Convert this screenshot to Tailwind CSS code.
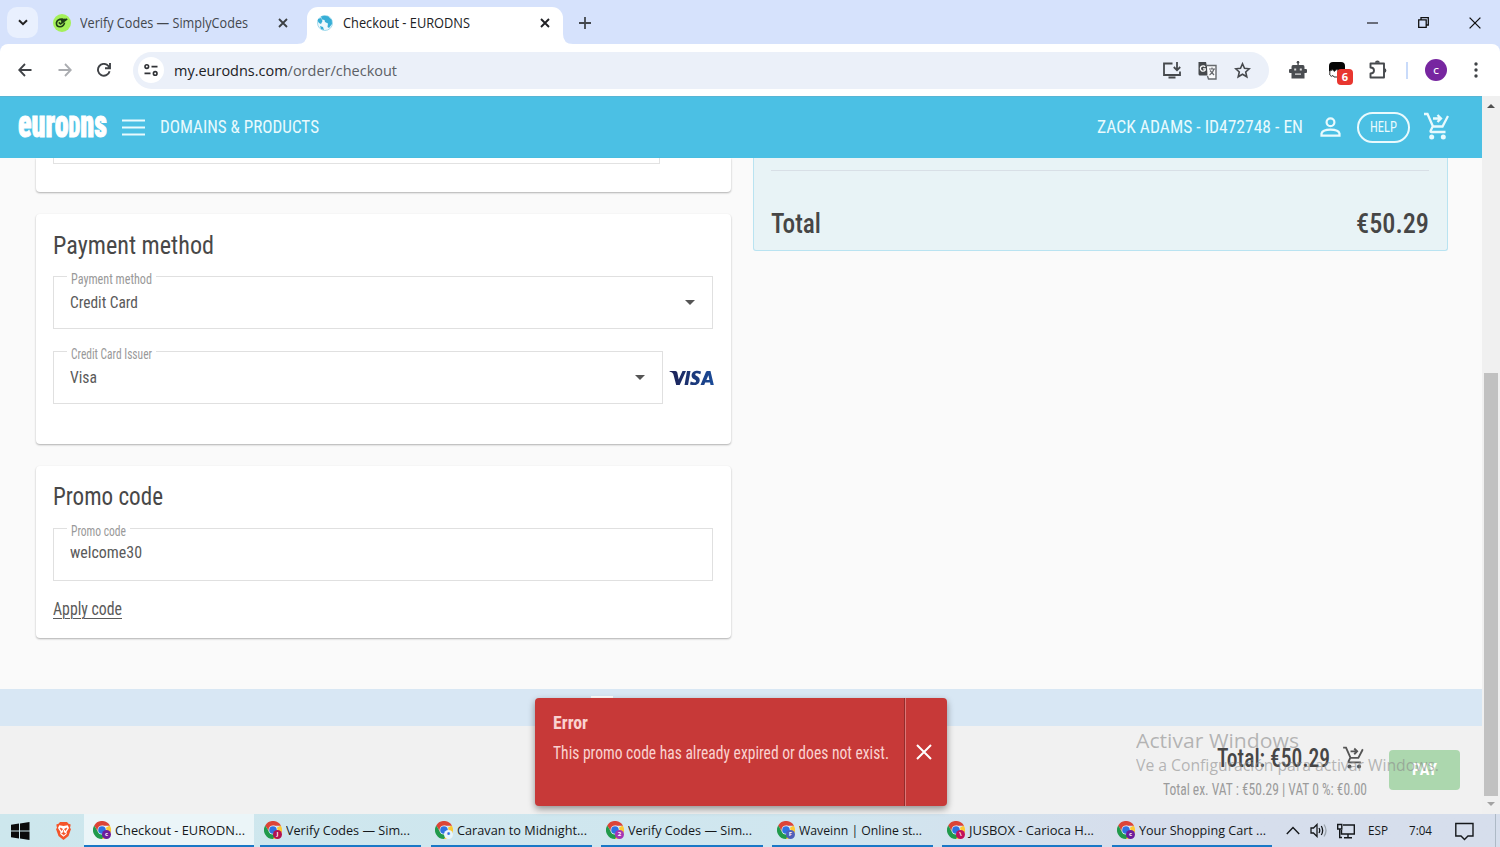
<!DOCTYPE html>
<html lang="en">
<head>
<meta charset="utf-8">
<title>Checkout - EURODNS</title>
<script src="https://cdn.jsdelivr.net/npm/@tailwindcss/browser@4"></script>
</head>
<body class="w-[1500px] h-[847px] overflow-hidden bg-[#fafafa] font-['Open_Sans',sans-serif]">
<svg class="hidden">
  <symbol id="chrome" viewBox="0 0 18 18">
    <path d="M9 9 L16.8 4.5 A9 9 0 0 1 9 18Z" fill="#fcc934"/>
    <path d="M9 4.8H17A9 9 0 0 0 1.2 4.5L5.3 11Z" fill="#dc4437"/><path d="M1.2 4.5L5.3 11.2L9 13.2L12.6 11.2L9 18A9 9 0 0 1 1.2 4.5Z" fill="#219a4c"/>
    <circle cx="9" cy="9" r="4.5" fill="#eef6fb"/><circle cx="9" cy="9" r="3.8" fill="#2f72e2"/>
  </symbol>
  <symbol id="cart" viewBox="0 0 26 28">
    <path d="M1 2H4.5L10 14.5H19.5L25 4M9.7 14.5L7.6 18.8Q7.3 20 8.5 20H22.5M10 6.5H17M14.5 3L18 6.5L14.5 10" fill="none" stroke="currentColor" stroke-width="2.3"/>
    <circle cx="8.7" cy="25" r="2.5" fill="currentColor"/><circle cx="20.3" cy="25" r="2.5" fill="currentColor"/>
  </symbol>
</svg>

<div class="flex flex-col w-full h-full">
  <!-- Tab strip -->
  <div class="h-[44px] shrink-0 flex bg-[#d6e2fc] text-[14px] text-[#43474d]">
    <div class="ml-[7px] mt-[7px] size-[31px] rounded-[10px] bg-[#e9f0fe] flex items-center justify-center">
      <svg width="10" height="7" viewBox="0 0 10 7" fill="none" stroke="#222" stroke-width="2"><path d="M1 1.2L5 5.2L9 1.2"/></svg>
    </div>
    <div class="ml-[15px] w-[236px] h-[45px] flex items-center">
      <svg width="18" height="18" viewBox="0 0 18 18"><circle cx="9" cy="9" r="9" fill="#a4f05a"/><path d="M10.5 5.2Q4.2 4.6 3.4 9Q3.4 12.8 7 12.8Q10.6 12.6 11.6 8.6M5.8 8.4L7.4 10L14.2 4.8M8 7.2L12.6 5" fill="none" stroke="#1f3d16" stroke-width="1.6" stroke-linejoin="round"/></svg>
      <span class="ml-[9px] block whitespace-nowrap origin-left" data-w="168">Verify Codes — SimplyCodes</span>
      <svg class="ml-[30px]" width="10" height="10" viewBox="0 0 10 10" stroke="#3c4043" stroke-width="1.8"><path d="M1 1L9 9M9 1L1 9"/></svg>
    </div>
    <div class="ml-[8px] w-[10px] h-[34px] self-end flex flex-col justify-end"><svg width="10" height="10"><path d="M10 0V10H0Q10 10 10 0" fill="#fff"/></svg></div>
    <div class="mt-[7px] w-[256px] h-[37px] bg-white rounded-t-[11px] flex items-center pb-[6px] text-[#202124]">
      <svg class="ml-[10px]" width="16" height="16" viewBox="0 0 16 16"><circle cx="8" cy="8" r="7.5" fill="#eef9fc" stroke="#8fd2e9" stroke-width=".8"/><path d="M4 1.6L7 .8L11 1.2L14.8 5L15 9L12 13L10.5 12L11 8.5L8 7L7.5 5L5 4.5ZM1 4L4 3L5.5 6L4 9L2 8L.7 6ZM3 11L6 12L7 15L4 14Z" fill="#37aed6"/></svg>
      <span class="ml-[10px] block whitespace-nowrap origin-left" data-w="127">Checkout - EURODNS</span>
      <svg class="ml-[70px]" width="10" height="10" viewBox="0 0 10 10" stroke="#202124" stroke-width="1.9"><path d="M1 1L9 9M9 1L1 9"/></svg>
    </div>
    <div class="w-[10px] flex flex-col justify-end"><svg width="10" height="10"><path d="M0 0V10H10Q0 10 0 0" fill="#fff"/></svg></div>
    <div class="ml-[6px] h-[45px] flex items-center"><svg width="12" height="12" viewBox="0 0 12 12" stroke="#43474d" stroke-width="1.8"><path d="M6 0V12M0 6H12"/></svg></div>
    <div class="ml-auto mr-[19px] h-[45px] flex items-center text-[#202124]">
      <svg width="11" height="11" viewBox="0 0 11 11" stroke="currentColor" stroke-width="1.2"><path d="M0 6H11"/></svg>
      <svg class="ml-[40px]" width="11" height="11" viewBox="0 0 11 11" fill="none" stroke="#111" stroke-width="1.3"><path d="M.7 2.8H8.2V10.3H.7ZM3 2.5V.7H10.3V8H8.5"/></svg>
      <svg class="ml-[40px]" width="12" height="12" viewBox="0 0 12 12" stroke="#111" stroke-width="1.3"><path d="M.6 .6L11.4 11.4M11.4 .6L.6 11.4"/></svg>
    </div>
  </div>

  <!-- Toolbar -->
  <div class="h-[52px] shrink-0 bg-[#d6e2fc]">
   <div class="h-[52px] bg-white rounded-t-[8px] flex items-center">
    <svg class="ml-[18px]" width="14" height="14" viewBox="0 0 14 14" fill="none" stroke="#3f4246" stroke-width="1.8"><path d="M13.5 7H1.5M7 1L1.2 7L7 13"/></svg>
    <svg class="ml-[26px]" width="14" height="14" viewBox="0 0 14 14" fill="none" stroke="#aaacb0" stroke-width="1.8"><path d="M.5 7H12.5M7 1L12.8 7L7 13"/></svg>
    <svg class="ml-[25px]" width="14" height="14" viewBox="0 0 14 14" fill="none" stroke="#3f4246" stroke-width="1.9"><path d="M12.6 8.2A5.9 5.9 0 1 1 11.4 3L13 4.7M13 0V5.2H8"/></svg>
    <div class="ml-[22px] w-[1136px] h-[37px] rounded-full bg-[#ebf0f9] flex items-center">
      <div class="ml-[5px] size-[26px] rounded-full bg-white flex items-center justify-center">
        <svg width="14" height="12" viewBox="0 0 14 12" fill="none" stroke="#303236" stroke-width="1.6"><circle cx="2.8" cy="2.6" r="1.8"/><path d="M7.5 2.6H13.5M.5 9.4H6.5"/><circle cx="11.2" cy="9.4" r="1.8"/></svg>
      </div>
      <div class="ml-[10px] w-[260px] text-[15px] text-[#5c6066]"><span class="block whitespace-nowrap origin-left" data-w="223"><span class="text-[#202124]">my.eurodns.com</span>/order/checkout</span></div>
      <svg class="ml-auto" width="18" height="17" viewBox="0 0 18 17" fill="none" stroke="#46494d" stroke-width="1.8"><path d="M9.5 1.5H1V13H17V9.5M14 0V8M10.8 5L14 8.3L17.2 5M5.5 15.5H12.5"/></svg>
      <svg class="ml-[17px]" width="19" height="19" viewBox="0 0 19 19"><path d="M.5 1H8L11 14.5H2Q.5 14.5 .5 13Z" fill="#46494d"/><path d="M9 4.5H18V18H10.5L9.5 15" fill="#fafbfd" stroke="#66696e" stroke-width="1.4"/><path d="M7.2 5.8A2.7 2.7 0 1 0 7.2 9.2V7.8H5" fill="none" stroke="#fff" stroke-width="1.3"/><path d="M11 8H17M14 6.5V8M16 8Q15 12 11.5 14M12 9.5L16 14" fill="none" stroke="#66696e" stroke-width="1.2"/></svg>
      <svg class="ml-[17px] mr-[18px]" width="17" height="17" viewBox="0 0 17 17" fill="none" stroke="#46494d" stroke-width="1.6"><path d="M8.5 1.8L10.5 6.3L15.3 6.8L11.7 10L12.8 14.8L8.5 12.3L4.2 14.8L5.3 10L1.7 6.8L6.5 6.3Z"/></svg>
    </div>
    <svg class="ml-[20px]" width="18" height="18" viewBox="0 0 18 18" fill="#4a4d51"><circle cx="9" cy="1.3" r="1.3"/><path d="M8.4 0H9.8V4H14Q15.5 4 15.5 6V8H17Q18 8 18 9V11Q18 12 17 12H15.5V17.5H2.5V12H1Q0 12 0 11V9Q0 8 1 8H2.5V6Q2.5 4 4 4H8.4Z"/><path d="M5.2 7.5H7.2V9.5H5.2ZM10.8 7.5H12.8V9.5H10.8ZM6 12.5H12V13.7H6Z" fill="#ddd"/></svg>
    <div class="ml-[22px] relative w-[24px] h-[26px]">
      <svg class="mt-[5px]" width="16" height="16" viewBox="0 0 16 16"><path d="M0 4Q0 0 4 0H12Q16 0 16 4V9H0Z" fill="#050505"/><path d="M.8 9V13Q2 15.5 4 13.5L5 15H9V8Q7 6.5 5.5 9.5Q4 6.5 .8 9" fill="#fff" stroke="#333" stroke-width="1"/></svg>
      <div class="absolute left-[8px] top-[12px] w-[16px] h-[16px] rounded-[4px] bg-[#e8362f] text-white text-[11px] font-bold leading-[16px] text-center">6</div>
    </div>
    <svg class="ml-[16px]" width="19" height="20" viewBox="0 0 19 20"><path d="M1.5 3.5H15V17.5H1.5V13.5Q5 13.5 5 10.5T1.5 7.5Z" fill="none" stroke="#46494d" stroke-width="1.9" stroke-linejoin="round"/><path d="M6 2.8A2.4 2.4 0 0 1 10.8 2.8ZM15.5 8A2.6 2.6 0 0 1 15.5 13Z" fill="#46494d"/></svg>
    <div class="ml-[18px] w-[2px] h-[17px] bg-[#c9dbfa]"></div>
    <div class="ml-[17px] size-[22px] rounded-full bg-[#7726a0] text-white text-[9px] font-semibold flex items-center justify-center leading-none">C</div>
    <svg class="ml-[27px]" width="4" height="16" viewBox="0 0 4 16" fill="#3f4246"><circle cx="2" cy="2" r="1.7"/><circle cx="2" cy="8" r="1.7"/><circle cx="2" cy="14" r="1.7"/></svg>
   </div>
  </div>

  <!-- Page viewport -->
  <div class="h-[718px] shrink-0 flex relative font-[Roboto,sans-serif] [font-stretch:75%]">
    <div class="w-[1482px] h-full flex flex-col bg-[#fafafa]">
      <header class="h-[62px] shrink-0 bg-[#4bc0e4] border-t border-[#57b5d4] flex items-center text-[18.5px] text-[#e9fafd]">
        <div class="ml-[18px] w-[89px] h-[40px] leading-[40px] -mt-[8px] text-[39px] font-black text-white"><span class="block whitespace-nowrap origin-left [-webkit-text-stroke:1px_white]" data-w="89">euro<span class="text-[29px]">D</span>ns</span></div>
        <svg class="ml-[15px]" width="23" height="17" viewBox="0 0 23 17" stroke="#e9fafd" stroke-width="2"><path d="M0 1.5H23M0 8.5H23M0 15.5H23"/></svg>
        <span class="ml-[15px] block whitespace-nowrap origin-left" data-w="159">DOMAINS &amp; PRODUCTS</span>
        <div class="ml-auto flex items-center mr-[33px]">
          <span class="block whitespace-nowrap origin-left" data-w="206">ZACK ADAMS - ID472748 - EN</span>
          <svg class="ml-[17px] -mt-[2px]" width="21" height="20" viewBox="0 0 21 20" fill="none" stroke="#e9fafd" stroke-width="2.2"><circle cx="10.5" cy="5.2" r="3.9"/><path d="M1.5 18.7V16.5Q2.5 12.7 10.5 12.7T19.5 16.5V18.7Z"/></svg>
          <div class="ml-[16px] w-[53px] h-[31px] rounded-full border-2 border-[#e9fafd] flex items-center justify-center text-[14.5px]"><span class="block whitespace-nowrap origin-left" data-w="27">HELP</span></div>
          <svg class="ml-[13px] -mt-[3px]" width="26" height="28"><use href="#cart"/></svg>
        </div>
      </header>

      <main class="h-[531px] shrink-0 flex items-start pl-[36px] text-[#5a5a5a]">
        <div class="w-[695px]">
          <section class="h-[34px] bg-white rounded-b-[4px] px-[17px] shadow-[0_1px_2px_rgba(0,0,0,0.3)]"><div class="h-[6px] w-[607px] border border-t-0 border-[#e2e2e2]"></div></section>
          <section class="mt-[22px] h-[230px] bg-white rounded-[4px] pl-[17px] pr-[18px] shadow-[0_1px_2px_rgba(0,0,0,0.3)]">
            <h2 class="pt-[11px] h-[62px] leading-[40px] text-[26.5px] text-[#484848]"><span class="block whitespace-nowrap origin-left" data-w="161">Payment method</span></h2>
            <div class="relative h-[53px] border border-[#e0e0e0] flex items-center pl-[16px] pr-[17px] text-[17px]">
              <span class="absolute left-[13px] -top-[8px] h-[20px] leading-[20px] px-[4px] bg-white text-[14px] text-[#999]"><span class="block whitespace-nowrap origin-left" data-w="81">Payment method</span></span>
              <span class="block whitespace-nowrap origin-left" data-w="68">Credit Card</span>
              <i class="ml-auto border-x-[5.5px] border-x-transparent border-t-[5.5px] border-t-[#555]"></i>
            </div>
            <div class="mt-[22px] flex items-center">
              <div class="relative w-[610px] shrink-0 h-[53px] border border-[#e0e0e0] flex items-center pl-[16px] pr-[17px] text-[17px]">
                <span class="absolute left-[13px] -top-[8px] h-[20px] leading-[20px] px-[4px] bg-white text-[14px] text-[#999]"><span class="block whitespace-nowrap origin-left" data-w="81">Credit Card Issuer</span></span>
                <span class="block whitespace-nowrap origin-left" data-w="27">Visa</span>
                <i class="ml-auto border-x-[5.5px] border-x-transparent border-t-[5.5px] border-t-[#555]"></i>
              </div>
              <svg class="ml-[6px] shrink-0" width="45" height="16" viewBox="0 0 45 16"><defs><linearGradient id="v" gradientUnits="userSpaceOnUse" x1="0" y1="0" x2="45" y2="0"><stop offset="0" stop-color="#1c2054"/><stop offset="1" stop-color="#1b4c99"/></linearGradient></defs><g fill="url(#v)"><path d="M.5 1H6.5Q8 1.2 8.3 2.5L9.7 9.5L13.5 1H17L10.7 15H7.2L4.3 4Q3.8 2.3 .5 1.4Z"/><path d="M18 1H21.5L19 15H15.5Z"/><path d="M32 1.4L31.4 4.3Q26.2 2.2 26.2 4.6C26.2 6.3 31.2 6.5 30.7 10.5C30 15.5 25 15.8 21 14.4L21.7 11.4Q26.8 13.7 27.1 11.2C27.3 9.3 22.2 9.2 22.6 5.2C23.2.7 28 .1 32 1.4Z"/><path fill-rule="evenodd" d="M38.3 1H41.5L44.8 15H41.5L41 12.6H36.2L35.2 15H31.5L37 1.8Q37.4 1 38.3 1ZM39.4 5.2L37.4 10H40.4Z"/></g></svg>
            </div>
          </section>
          <section class="mt-[22px] h-[172px] bg-white rounded-[4px] pl-[17px] pr-[18px] shadow-[0_1px_2px_rgba(0,0,0,0.3)]">
            <h2 class="pt-[10px] h-[62px] leading-[40px] text-[26.5px] text-[#484848]"><span class="block whitespace-nowrap origin-left" data-w="110">Promo code</span></h2>
            <div class="relative h-[53px] border border-[#e0e0e0] flex items-center pb-[3px] pl-[16px] text-[17px]">
              <span class="absolute left-[13px] -top-[8px] h-[20px] leading-[20px] px-[4px] bg-white text-[14px] text-[#999]"><span class="block whitespace-nowrap origin-left" data-w="55">Promo code</span></span>
              <span class="block whitespace-nowrap origin-left" data-w="72">welcome30</span>
            </div>
            <div class="mt-[16px] h-[25px] leading-[25px] text-[17.5px] flex"><span class="block whitespace-nowrap origin-left underline underline-offset-[3px] decoration-1" data-w="69">Apply code</span></div>
          </section>
        </div>
        <aside class="ml-[22px] w-[695px] h-[93px] pl-[17px] pr-[18px] pt-[12px] bg-[#e8f3f6] border border-t-0 border-[#b9e3f1] rounded-b-[3px]">
          <div class="border-t border-[#d8dfe6] h-[32px]"></div>
          <div class="flex justify-between leading-[43px] text-[28px] font-medium text-[#464646]"><span class="block whitespace-nowrap origin-left" data-w="50">Total</span><span class="block whitespace-nowrap origin-left" data-w="73">€50.29</span></div>
        </aside>
      </main>

      <div class="h-[37px] shrink-0 bg-[#d8e7f4] pl-[591px] pt-[7px]"><div class="w-[22px] h-[3px] bg-white"></div></div>
      <footer class="h-[88px] shrink-0 bg-[#f1f1f1] flex justify-end items-start pr-[22px]">
        <div class="mt-[14px] flex flex-col items-end mr-[22px]">
          <div class="h-[38px] flex items-center text-[25px] font-medium text-[#464646]"><span class="block whitespace-nowrap origin-left" data-w="113">Total: €50.29</span><svg class="ml-[12px] mr-[3px] -mt-[4px] text-[#555]" width="22" height="23" viewBox="0 0 26 28"><use href="#cart"/></svg></div>
          <div class="h-[24px] flex items-center text-[16.5px] text-[#9b9b9b]"><span class="block whitespace-nowrap origin-left" data-w="204">Total ex. VAT : €50.29 | VAT 0 %: €0.00</span></div>
        </div>
        <div class="mt-[24px] w-[71px] h-[40px] rounded-[4px] bg-[#acd7ae] flex items-center justify-center text-[17px] font-bold text-white"><span class="block whitespace-nowrap origin-left" data-w="25">PAY</span></div>
      </footer>
    </div>

    <!-- Scrollbar -->
    <div class="w-[18px] h-full bg-[#f0f0f0] flex flex-col items-center">
      <i class="mt-[8px] border-x-[4px] border-x-transparent border-b-[4px] border-b-[#505050]"></i>
      <div class="mt-[265px] w-[14px] h-[423px] bg-[#c1c1c1]"></div>
      <i class="mt-[6px] border-x-[4px] border-x-transparent border-t-[4px] border-t-[#a3a3a3]"></i>
    </div>

    <!-- Windows activation watermark -->
    <div class="absolute left-[1136px] top-[630px] text-[#8a8a8a]/60 font-['Open_Sans',sans-serif] [font-stretch:100%]">
      <div class="h-[29px] leading-[29px] text-[20.5px] flex"><span class="block whitespace-nowrap origin-left" data-w="163">Activar Windows</span></div>
      <div class="h-[22px] leading-[21px] text-[16px] flex"><span class="block whitespace-nowrap origin-left" data-w="303">Ve a Configuración para activar Windows.</span></div>
    </div>

    <!-- Error toast -->
    <div class="absolute left-[535px] top-[602px] w-[412px] h-[108px] rounded-[4px] bg-[#c73938] shadow-[0_3px_7px_rgba(0,0,0,0.4)] flex text-[#fad2d0]">
      <div class="w-[370px] pl-[18px] pt-[13px] border-r border-[#932c2c]">
        <div class="h-[25px] flex items-center text-[18.5px] font-bold"><span class="block whitespace-nowrap origin-left" data-w="35">Error</span></div>
        <div class="mt-[4px] h-[25px] flex items-center text-[18px]"><span class="block whitespace-nowrap origin-left" data-w="336">This promo code has already expired or does not exist.</span></div>
      </div>
      <div class="flex-1 border-l border-[#dc7776] flex items-center justify-center pr-[5px]"><svg width="16" height="16" viewBox="0 0 16 16" stroke="#fff" stroke-width="2"><path d="M1 1L15 15M15 1L1 15"/></svg></div>
    </div>
  </div>

  <!-- Windows taskbar -->
  <div class="h-[33px] shrink-0 flex items-center bg-linear-to-r from-[#cde7ed] via-[#d0e6ef] via-55% to-[#d6deec] to-75% text-[13.5px] text-[#15181b]">
    <svg class="ml-[11px]" width="19" height="18" viewBox="0 0 19 18" fill="#0b0b0b"><path d="M0 2.8L8 1.6V8.5H0ZM9 1.4L18.5 0V8.5H9ZM0 9.5H8V16.4L0 15.2ZM9 9.5H18.5V18L9 16.6Z"/></svg>
    <svg class="ml-[26px]" width="15" height="18" viewBox="0 0 15 18"><path d="M4 0H11L12.5 1.7L14.7 2.5L14 6L15 7L12.5 14L7.5 18L2.5 14L0 7L1 6L.3 2.5L2.5 1.7Z" fill="#f4552a"/><path d="M3.3 3.2L7.5 4L11.7 3.2L13 6L10.5 10L10.8 12L7.5 14.8L4.2 12L4.5 10L2 6Z" fill="#fff"/><path d="M4 6L6.5 7L5.5 8.5ZM11 6L8.5 7L9.5 8.5ZM7.5 8V11M5.5 11.5L7.5 10.5L9.5 11.5L7.5 13" fill="#f4552a" stroke="#f4552a" stroke-width=".7"/></svg>
    <div class="ml-[13px] w-[170px] h-full bg-[#ebf5f8] border-b-2 border-[#1a78c6] flex items-center pl-[9px] pt-[1px]">
      <div class="relative size-[18px]"><svg width="18" height="18"><use href="#chrome"/></svg><b class="absolute left-[9px] top-[9px] size-[9px] rounded-full bg-[#6d1b9c] text-white text-[6px] leading-[8px] text-center">c</b></div>
      <span class="ml-[4px] block whitespace-nowrap origin-left" data-w="130">Checkout - EURODN...</span>
    </div>
    <div class="ml-[6px] w-[161px] h-full border-b-2 border-[#1a78c6] flex items-center pl-[4px] pt-[1px]">
      <div class="relative size-[18px]"><svg width="18" height="18"><use href="#chrome"/></svg><b class="absolute left-[9px] top-[9px] size-[9px] rounded-full bg-[#b3134f] text-white text-[6px] leading-[8px] text-center">J</b></div>
      <span class="ml-[4px] block whitespace-nowrap origin-left" data-w="124">Verify Codes — Sim...</span>
    </div>
    <div class="ml-[10px] w-[161px] h-full border-b-2 border-[#1a78c6] flex items-center pl-[4px] pt-[1px]">
      <div class="relative size-[18px]"><svg width="18" height="18"><use href="#chrome"/></svg><b class="absolute left-[9px] top-[9px] size-[9px] rounded-full bg-[#e9f5fb] text-[#2f72e2] text-[9px] leading-[7px] text-center">•</b></div>
      <span class="ml-[4px] block whitespace-nowrap origin-left" data-w="130">Caravan to Midnight...</span>
    </div>
    <div class="ml-[9px] w-[162px] h-full border-b-2 border-[#1a78c6] flex items-center pl-[5px] pt-[1px]">
      <div class="relative size-[18px]"><svg width="18" height="18"><use href="#chrome"/></svg><b class="absolute left-[9px] top-[9px] size-[9px] rounded-full bg-[#a535b5] text-white text-[6px] leading-[8px] text-center">2</b></div>
      <span class="ml-[4px] block whitespace-nowrap origin-left" data-w="124">Verify Codes — Sim...</span>
    </div>
    <div class="ml-[9px] w-[161px] h-full border-b-2 border-[#1a78c6] flex items-center pl-[5px] pt-[1px]">
      <div class="relative size-[18px]"><svg width="18" height="18"><use href="#chrome"/></svg><b class="absolute left-[9px] top-[9px] size-[9px] rounded-full bg-[#5060ba] text-white text-[6px] leading-[8px] text-center">F</b></div>
      <span class="ml-[4px] block whitespace-nowrap origin-left" data-w="123">Waveinn | Online st...</span>
    </div>
    <div class="ml-[9px] w-[160px] h-full border-b-2 border-[#1a78c6] flex items-center pl-[5px] pt-[1px]">
      <div class="relative size-[18px]"><svg width="18" height="18"><use href="#chrome"/></svg><b class="absolute left-[9px] top-[9px] size-[9px] rounded-full bg-[#c2125c] text-white text-[6px] leading-[8px] text-center">\</b></div>
      <span class="ml-[4px] block whitespace-nowrap origin-left" data-w="125">JUSBOX - Carioca H...</span>
    </div>
    <div class="ml-[10px] w-[160px] h-full border-b-2 border-[#1a78c6] flex items-center pl-[5px] pt-[1px]">
      <div class="relative size-[18px]"><svg width="18" height="18"><use href="#chrome"/></svg><b class="absolute left-[9px] top-[9px] size-[9px] rounded-full bg-[#6d1b9c] text-white text-[6px] leading-[8px] text-center">c</b></div>
      <span class="ml-[4px] block whitespace-nowrap origin-left" data-w="127">Your Shopping Cart ...</span>
    </div>
    <svg class="ml-[14px]" width="14" height="9" viewBox="0 0 14 9" fill="none" stroke="#15181b" stroke-width="1.4"><path d="M.8 8L7 1.5L13.2 8"/></svg>
    <svg class="ml-[10px]" width="18" height="15" viewBox="0 0 18 15" fill="none" stroke="#15181b" stroke-width="1.3"><path d="M1 5H3.5L7 1.5V13.5L3.5 10H1ZM9 5Q10.5 7.5 9 10M11.3 3Q14 7.5 11.3 12"/><path d="M14 1.5Q18 7.5 14 13.5" stroke="#9aa3ab"/></svg>
    <svg class="ml-[9px]" width="18" height="16" viewBox="0 0 18 16" fill="none" stroke="#15181b" stroke-width="1.4"><path d="M6 2H17.3V11H4.5V7M11 11V14.5M7 14.7H15M.7 1.5H4.8V6H.7ZM2.7 6V14.5H5"/></svg>
    <span class="ml-[13px] block whitespace-nowrap origin-left" data-w="20">ESP</span>
    <span class="ml-[21px] block whitespace-nowrap origin-left" data-w="23">7:04</span>
    <svg class="ml-[23px] mt-[2px]" width="19" height="19" viewBox="0 0 19 19" fill="none" stroke="#15181b" stroke-width="1.4"><path d="M.8 1.5H18V14H13L9.5 17.5L6 14H.8Z"/></svg>
    <div class="ml-auto mr-[4px] w-px h-full bg-[#aebac6]"></div>
  </div>
</div>

<script>
// Squeeze each label horizontally to its declared width, again whenever its natural size changes.
function fit(el) {
  el.style.width = 'max-content';
  el.style.flexShrink = '0';
  var natural = parseFloat(getComputedStyle(el).width), target = +el.dataset.w;
  if (!natural) return;
  el.style.transform = 'scaleX(' + target / natural + ')';
  el.style.marginRight = (target - natural) + 'px';
}
var labels = document.querySelectorAll('[data-w]');
var observer = new ResizeObserver(function (entries) {
  entries.forEach(function (e) { fit(e.target); });
});
labels.forEach(function (el) { fit(el); observer.observe(el); });
window.addEventListener('load', function () { labels.forEach(fit); });
</script>
</body>
</html>
